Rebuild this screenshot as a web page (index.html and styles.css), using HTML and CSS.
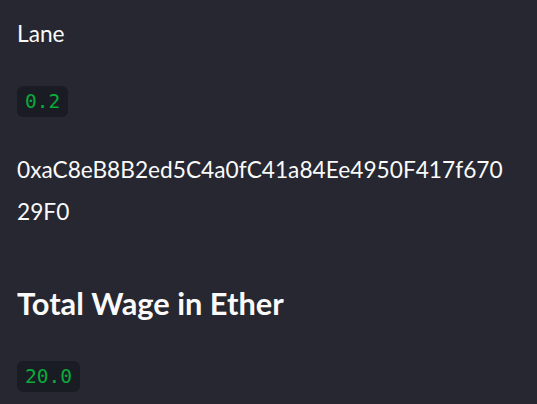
FILE: index.html
```html
<!DOCTYPE html>
<html lang="en">
<head>
<meta charset="utf-8">
<title>Wage</title>
<link rel="stylesheet" href="styles.css">
</head>
<body>
<main class="content">
  <p class="text label">Lane</p>
  <p class="code-row"><code class="code">0.2</code></p>
  <p class="text address">0xaC8eB8B2ed5C4a0fC41a84Ee4950F417f67029F0</p>
  <h2 class="heading">Total Wage in Ether</h2>
  <p class="code-row"><code class="code">20.0</code></p>
</main>
</body>
</html>
```
FILE: styles.css
```css
html, body {
  margin: 0;
  padding: 0;
  background: #262730;
  height: 100%;
}
body {
  font-family: Lato, "Open Sans", sans-serif;
  color: #fafafa;
}
.content {
  padding: 13px 30px 0 17px;
  display: flex;
  flex-direction: column;
  align-items: flex-start;
}
.text {
  margin: 0;
  font-size: 22.7px;
  line-height: 42px;
}
.label {
  margin-bottom: 31px;
}
.address {
  word-break: break-all;
  margin-top: 2px;
  margin-bottom: 46px;
}
.code-row {
  margin: 0 0 30px;
  line-height: 1;
}
.code {
  display: inline-block;
  font-family: "DejaVu Sans Mono", monospace;
  font-size: 19.5px;
  line-height: 23px;
  padding: 4px 8px;
  border-radius: 6px;
  background: #1a1c24;
  color: #09ab3b;
}
.heading {
  margin: 0 0 32px;
  font-size: 30.8px;
  font-weight: 700;
  line-height: 50px;
}
```
